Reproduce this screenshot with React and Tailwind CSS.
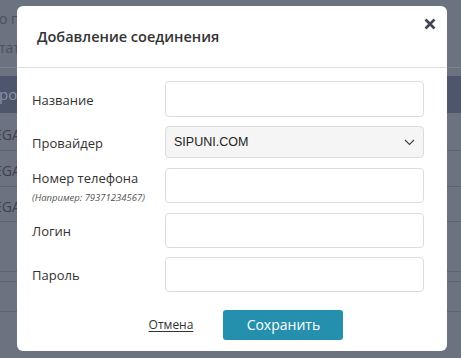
import { useState } from "react";

const fields = [
  { label: "Название", type: "text", name: "title" },
  { label: "Провайдер", type: "select", name: "provider" },
  { label: "Номер телефона", hint: "(Например: 79371234567)", type: "text", name: "phone" },
  { label: "Логин", type: "text", name: "login" },
  { label: "Пароль", type: "password", name: "password" },
];

const BackgroundPage = () => {
  return (
    <div className="w-[461px] h-[358px] bg-[#6b7280] flex flex-col text-[#3b4150] whitespace-nowrap">
      <div className="h-[68px] border-b border-[#7a808c] flex flex-col pt-[9px] text-[14px] leading-[20px] text-[#4a5160]">
        <div className="-ml-[1px]">о п</div>
        <div className="mt-[9px] -ml-[1px]">тат</div>
      </div>
      <div className="h-[8px]"></div>
      <div className="h-[37px] bg-[#4d566c] text-[#8a93a6] text-[15px] flex items-center -ml-[1px]">
        ро
      </div>
      <div className="h-[38px] border-b border-[#5c6371] flex items-center pt-[6px] text-[14px] -ml-[6px]">EGA</div>
      <div className="h-[36px] border-b border-[#5c6371] flex items-center pt-[4px] text-[14px] -ml-[6px]">EGA</div>
      <div className="h-[35px] border-b border-[#5c6371] flex items-center pt-[4px] text-[14px] -ml-[6px]">EGA</div>
      <div className="h-[50px] border-b border-[#5c6371]"></div>
      <div className="h-[10px] border-b border-[#5c6371]"></div>
      <div className="h-[30px] border-b border-[#5c6371]"></div>
    </div>
  );
};

const App = () => {
  const [formData, setFormData] = useState({
    title: "",
    provider: "SIPUNI.COM",
    phone: "",
    login: "",
    password: "",
  });

  const handleChange = (e) => {
    setFormData({
      ...formData,
      [e.target.name]: e.target.value,
    });
  };

  return (
    <div
      className="relative w-[461px] h-[358px] overflow-hidden"
      style={{ fontFamily: '"Open Sans", sans-serif' }}
    >
      <BackgroundPage />

      <div className="absolute left-[17px] top-[6px] w-[430px] h-[345px] bg-white rounded-[6px] flex flex-col">
        <div className="h-[62px] border-b border-[#dddddd] flex items-center pl-[20px]">
          <h1 className="text-[14.5px] font-semibold text-[#333333]">
            Добавление соединения
          </h1>
        </div>

        <button className="absolute right-[9px] top-[10px] w-[16px] h-[16px] flex items-center justify-center">
          <svg width="12" height="12" viewBox="0 0 12 12">
            <path d="M1.5 1.5 L10.5 10.5 M10.5 1.5 L1.5 10.5" stroke="#3f4650" strokeWidth="2.6" strokeLinecap="butt" />
          </svg>
        </button>

        <form className="flex flex-col gap-[9px] pl-[15px] pr-[23px] pt-[13px]">
          {fields.map((f) => (
            <div key={f.name} className="flex items-center">
              <div className="w-[133px] flex flex-col text-[13px] text-[#333333] pt-[4px]">
                <span className={f.hint ? "-mt-[2px]" : ""}>{f.label}</span>
                {f.hint && (
                  <span className="text-[9.5px] italic text-[#555555] leading-[12px] mt-[3px]">
                    {f.hint}
                  </span>
                )}
              </div>

              {f.type === "select" ? (
                <div className="relative flex-1 h-[32px]">
                  <select
                    name={f.name}
                    value={formData[f.name]}
                    onChange={handleChange}
                    className="w-full h-full appearance-none bg-[#f5f5f5] border border-[#dcdcdc] rounded-[4px] pl-[8px] text-[12.5px] text-[#222222] outline-none"
                    style={{ fontFamily: '"Liberation Sans", Arial, sans-serif' }}
                  >
                    <option>SIPUNI.COM</option>
                  </select>
                  <svg
                    className="absolute right-[9px] top-[13px] pointer-events-none"
                    width="11"
                    height="7"
                    viewBox="0 0 11 7"
                  >
                    <path d="M1 1 L5.5 5.5 L10 1" fill="none" stroke="#444444" strokeWidth="1.2" />
                  </svg>
                </div>
              ) : (
                <input
                  type={f.type}
                  name={f.name}
                  value={formData[f.name]}
                  onChange={handleChange}
                  className={`flex-1 ${f.name === "title" ? "h-[36px]" : "h-[35px]"} border border-[#dcdcdc] rounded-[4px] px-[8px] text-[13px] outline-none`}
                />
              )}
            </div>
          ))}

          <div className="flex items-center justify-center gap-[30px] mt-[9px] pl-[36px]">
            <a href="#" className="text-[12px] text-[#333333] underline underline-offset-[2px]">
              Отмена
            </a>
            <button
              type="button"
              className="w-[120px] h-[30px] bg-[#2590ad] text-white text-[14px] rounded-[3px]"
            >
              Сохранить
            </button>
          </div>
        </form>
      </div>
    </div>
  );
};

export default App;
